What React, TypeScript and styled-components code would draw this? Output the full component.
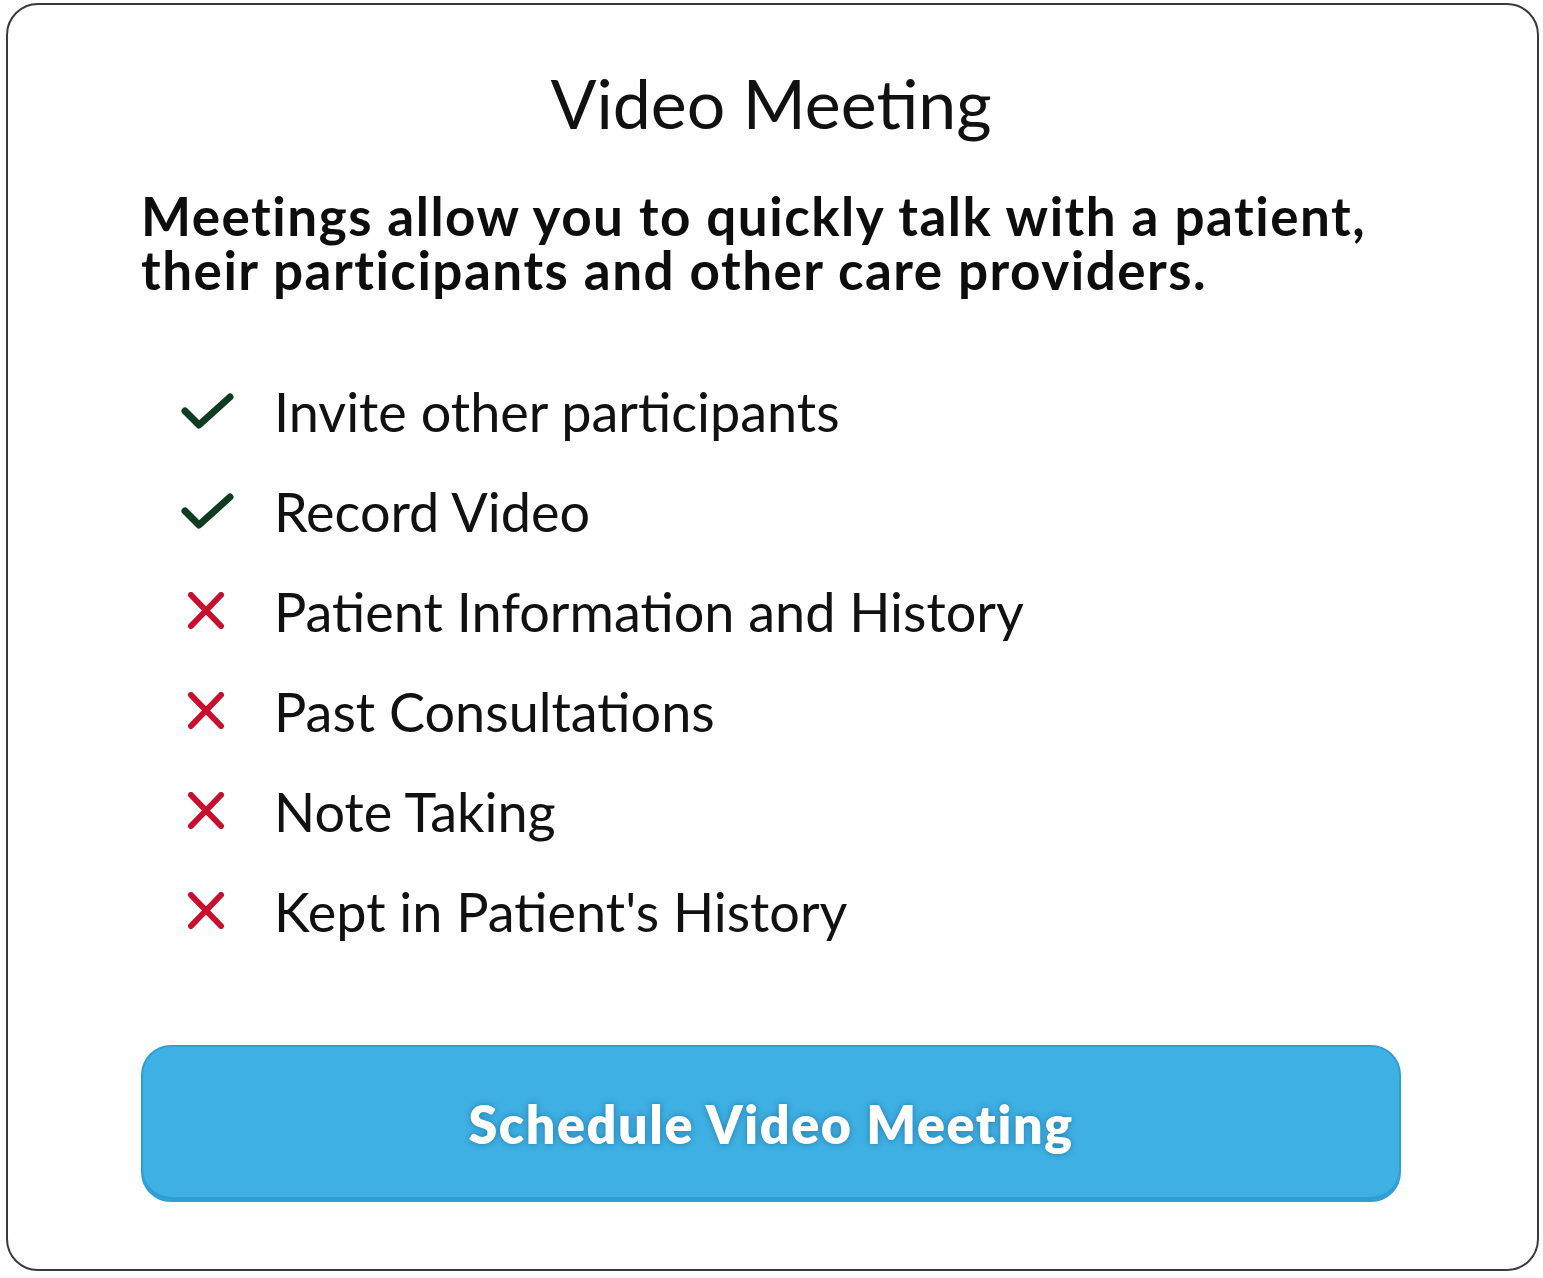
import React from "react";
import styled, { createGlobalStyle } from "styled-components";

const Global = createGlobalStyle`
  html, body { margin: 0; padding: 0; background: #ffffff; }
  body { font-family: Lato, "Noto Sans", sans-serif; color: #111111; }
`;

const Card = styled.div`
  box-sizing: border-box;
  margin: 3px 0 0 6px;
  width: 1533px;
  height: 1268px;
  border: 2px solid #3a3a3a;
  border-radius: 32px;
  background: #fefefe;
  padding: 0 136px 0 133px;
  display: flex;
  flex-direction: column;
`;

const Title = styled.h1`
  margin: 60px 0 0 0;
  font-size: 68px;
  line-height: 76px;
  font-weight: 400;
  text-align: center;
  color: #111111;
`;

const Lead = styled.p`
  margin: 48px 0 0 0;
  font-size: 53px;
  line-height: 54px;
  font-weight: 700;
  letter-spacing: 1.5px;
  color: #0d0d0d;
`;

const List = styled.ul`
  list-style: none;
  margin: 64px 0 0 0;
  padding: 0 0 0 40px;
  display: flex;
  flex-direction: column;
`;

const Item = styled.li`
  display: flex;
  align-items: center;
  height: 100px;
  font-size: 54px;
  color: #111111;
`;

const IconBox = styled.span`
  width: 93px;
  display: flex;
  align-items: center;
  flex-shrink: 0;
`;

const Button = styled.button`
  margin-top: 84px;
  height: 157px;
  width: 100%;
  border: 2px solid #2d9fd6;
  border-radius: 30px;
  background: #3eb0e3;
  box-shadow: inset 0 -3px 0 rgba(20, 120, 190, 0.35);
  color: #ffffff;
  font-family: Lato, "Noto Sans", sans-serif;
  font-weight: 800;
  font-size: 52px;
  letter-spacing: 1.6px;
  text-shadow: 0 0 6px rgba(0, 60, 110, 0.45);
  cursor: pointer;
`;

const Check = () => (
  <svg width="54" height="38" viewBox="0 0 54 38">
    <path d="M4 19 L18 33 L49 5" fill="none" stroke="#0e3b22" strokeWidth="7" strokeLinecap="round" strokeLinejoin="round" />
  </svg>
);

const Cross = () => (
  <svg width="54" height="38" viewBox="0 0 54 38">
    <path d="M10 3 L40 34 M40 3 L10 34" fill="none" stroke="#c8102e" strokeWidth="6" strokeLinecap="round" />
  </svg>
);

const items: { ok: boolean; label: string }[] = [
  { ok: true, label: "Invite other participants" },
  { ok: true, label: "Record Video" },
  { ok: false, label: "Patient Information and History" },
  { ok: false, label: "Past Consultations" },
  { ok: false, label: "Note Taking" },
  { ok: false, label: "Kept in Patient's History" },
];

export default function App() {
  return (
    <>
      <Global />
      <Card>
        <Title>Video Meeting</Title>
        <Lead>
          Meetings allow you to quickly talk with a patient,
          <br />
          their participants and other care providers.
        </Lead>
        <List>
          {items.map((it) => (
            <Item key={it.label}>
              <IconBox>{it.ok ? <Check /> : <Cross />}</IconBox>
              {it.label}
            </Item>
          ))}
        </List>
        <Button>Schedule Video Meeting</Button>
      </Card>
    </>
  );
}
